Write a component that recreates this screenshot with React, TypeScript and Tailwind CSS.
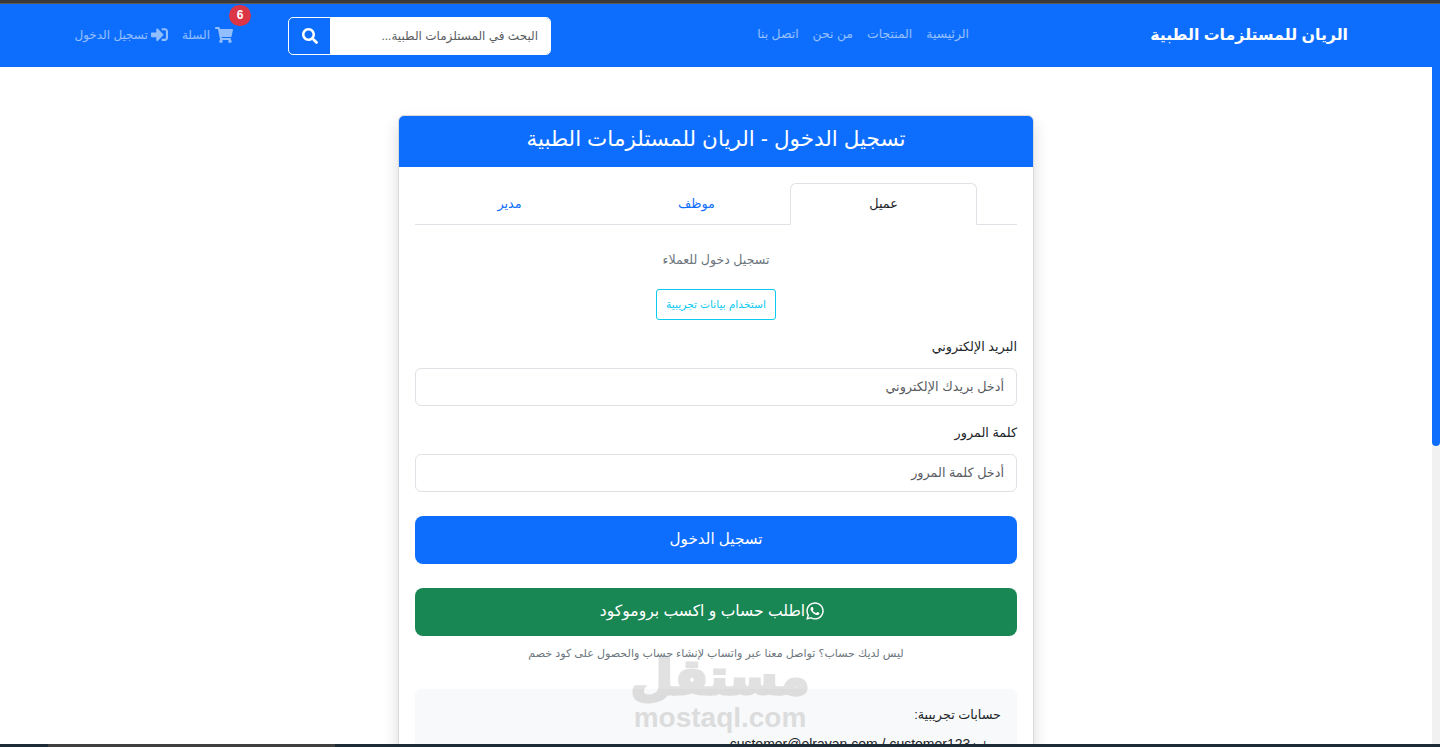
import { FaSearch, FaShoppingCart, FaSignInAlt, FaWhatsapp } from 'react-icons/fa';

const arabic = "font-['Liberation_Sans','DejaVu_Sans',sans-serif]";

function Navbar() {
  return (
    <nav className="flex h-[63px] shrink-0 items-center whitespace-nowrap bg-[#0d6efd] pr-[84px]">
      <a className="w-[196px] shrink-0 pb-[2px] text-[15.8px] leading-none font-bold text-white">الريان للمستلزمات الطبية</a>
      <ul className="mr-[183px] flex w-[218px] shrink-0 gap-[14px] pb-[2px] text-[12.4px] text-white/55">
        <li>الرئيسية</li>
        <li>المنتجات</li>
        <li>من نحن</li>
        <li>اتصل بنا</li>
      </ul>
      <form className="mr-[200px] flex h-[38px] w-[263px] shrink-0 overflow-hidden rounded-[5px] border border-white">
        <div className="flex flex-1 items-center bg-white pr-[12px] text-[12px] text-[#595c5f]">
          البحث في المستلزمات الطبية...
        </div>
        <button className="flex w-[41px] items-center justify-center text-white">
          <FaSearch size={16} />
        </button>
      </form>
      <a className="relative mr-[55px] flex items-center gap-[5px] pb-[2px] text-[12px] text-white/55">
        <FaShoppingCart size={18} />
        السلة
        <span className="absolute -top-[21px] -right-[18px] flex h-[21px] w-[22px] items-center justify-center rounded-full bg-[#dc3545] text-[12px] font-bold text-white">
          6
        </span>
      </a>
      <a className="mr-[14px] flex items-center gap-[3px] pb-[2px] text-[12px] text-white/55">
        <FaSignInAlt size={17} />
        تسجيل الدخول
      </a>
    </nav>
  );
}

function Field({ label, placeholder }: { label: string; placeholder: string }) {
  return (
    <div>
      <label className="mb-[11px] block text-[12.8px] leading-[20px] text-[#212529]">{label}</label>
      <div className="flex h-[38px] items-center rounded-[6px] border border-[#dee2e6] bg-white px-3 text-[12.8px] text-[#595c5f]">
        {placeholder}
      </div>
    </div>
  );
}

function LoginCard() {
  return (
    <section className="mx-auto mt-[48px] w-[636px] rounded-[6px] border border-[#d9dadb] bg-white shadow-[0_8px_16px_rgba(0,0,0,0.15)]">
      <h1 className="flex h-[51px] items-center justify-center rounded-t-[5px] bg-[#0d6efd] pb-[5px] text-[21.5px] text-white">
        تسجيل الدخول - الريان للمستلزمات الطبية
      </h1>
      <div className="px-4 pt-4">
        <ul className="flex h-[42px] border-b border-[#dee2e6] pr-[40px] text-center text-[12.8px] text-[#0d6efd]">
          <li className="flex h-[42px] w-[187px] items-center justify-center rounded-t-[6px] border border-b-white border-[#dee2e6] bg-white text-[#212529]">
            عميل
          </li>
          <li className="flex w-[187px] items-center justify-center">موظف</li>
          <li className="flex w-[187px] items-center justify-center">مدير</li>
        </ul>
        <p className="mt-[25px] text-center text-[12.6px] leading-[21px] text-[#6c757d]">تسجيل دخول للعملاء</p>
        <div className="mt-[18px] flex justify-center">
          <button className="flex h-[31px] w-[120px] items-center justify-center rounded-[3px] border border-[#0dcaf0] text-[10.7px] text-[#0dcaf0]">
            استخدام بيانات تجريبية
          </button>
        </div>
        <div className="mt-[17px] flex flex-col gap-[17px]">
          <Field label="البريد الإلكتروني" placeholder="أدخل بريدك الإلكتروني" />
          <Field label="كلمة المرور" placeholder="أدخل كلمة المرور" />
        </div>
        <button className="mt-[24px] flex h-[48px] w-full items-center justify-center rounded-[8px] bg-[#0d6efd] pb-[2px] text-[15.2px] text-white">
          تسجيل الدخول
        </button>
        <button className="mt-[24px] flex h-[48px] w-full items-center justify-center rounded-[8px] bg-[#198754] pr-[7px] pb-[2px] text-[15.6px] text-white">
          <FaWhatsapp size={20} />
          اطلب حساب و اكسب بروموكود
        </button>
        <p className="mt-[9px] text-center text-[11.1px] leading-[17px] text-[#6c757d]">
          ليس لديك حساب؟ تواصل معنا عبر واتساب لإنشاء حساب والحصول على كود خصم
        </p>
        <div className="mt-[27px] rounded-[6px] bg-[#f8f9fa] px-4 pt-[15px] pb-4 text-[#212529]">
          <p className="text-[12.8px] leading-[21px]">حسابات تجريبية:</p>
          <p className="mt-[9px] text-[14px] leading-[21px]">
            <span className="text-[10px]">عميل : </span>customer@elrayan.com / customer123
          </p>
        </div>
      </div>
    </section>
  );
}

export default function App() {
  return (
    <div dir="rtl" className={`relative flex h-[747px] flex-col overflow-hidden bg-white ${arabic}`}>
      <div className="h-[4px] shrink-0 border-b border-[#5a5a5a] bg-[#3a3a3a]" />
      <div className="flex min-h-0 flex-1 flex-row-reverse" dir="ltr">
        <div className="w-[8px] shrink-0 bg-[#f1f1f1]">
          <div className="h-[442px] rounded-b-[4px] bg-[#0d6efd]" />
        </div>
        <main dir="rtl" className="min-w-0 flex-1 overflow-hidden">
          <Navbar />
          <LoginCard />
        </main>
      </div>
      <div dir="ltr" className="absolute bottom-0 left-0 flex h-[3px] w-full bg-[#1c2b36]">
        <div className="ml-[48px] w-[287px] bg-[#3f3f3f]" />
      </div>
      {/* mostaql watermark over the card */}
      <div className="pointer-events-none absolute top-[652px] left-[632px] flex w-[176px] flex-col items-center text-[#8a8a8a] opacity-25">
        <span className="text-[49px] leading-[50px] font-bold [-webkit-text-stroke:3px_#8a8a8a]">مستقل</span>
        <span dir="ltr" className="mt-[1px] text-[28px] leading-[30px] font-bold">mostaql.com</span>
      </div>
    </div>
  );
}
